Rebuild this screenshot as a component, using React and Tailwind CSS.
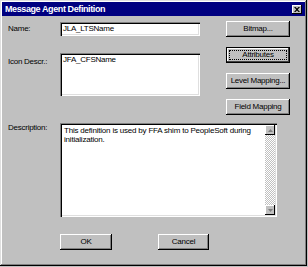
import React from "react";

const font = { fontFamily: '"Liberation Sans",Arial,sans-serif' };

function Btn({ children, w = "w-[64px]", def = false }) {
  if (def) {
    return (
      <div className={`${w} h-[16px] bg-[#c0c0c0] border border-black flex items-center justify-center`}>
        <div className="w-full h-full shadow-[inset_-1px_-1px_#404040,inset_1px_1px_#fff] p-[2px]">
          <div className="w-full h-full border border-dotted border-black flex items-center justify-center text-[8px] tracking-[-0.25px] leading-none whitespace-nowrap">
            {children}
          </div>
        </div>
      </div>
    );
  }
  return (
    <div
      className={`${w} h-[16px] bg-[#c0c0c0] shadow-[inset_-1px_-1px_#000,inset_1px_1px_#fff,inset_-2px_-2px_#808080] flex items-center justify-center text-[8px] tracking-[-0.25px] leading-none whitespace-nowrap`}
    >
      {children}
    </div>
  );
}

function Field({ className, children }) {
  return (
    <div className={`bg-white shadow-[inset_1px_1px_#808080,inset_2px_2px_#000,inset_-1px_-1px_#fff,inset_-2px_-2px_#dfdfdf] ${className}`}>
      {children}
    </div>
  );
}

export default function App() {
  return (
    <div style={font} className="w-[308px] h-[267px] bg-[#c0c0c0] text-black relative">
      <div className="w-[307px] h-[266px] bg-[#c0c0c0] shadow-[inset_-1px_-1px_#000,inset_1px_1px_#dfdfdf,inset_-2px_-2px_#808080,inset_2px_2px_#fff] p-[2px] flex flex-col">
        {/* title bar */}
        <div className="h-[14px] bg-[#000080] flex items-center justify-between pl-[3px] pr-[3px]">
          <span className="text-white font-bold text-[9px] leading-none tracking-[-0.4px]">Message Agent Definition</span>
          <div className="w-[10px] h-[9px] bg-[#c0c0c0] shadow-[inset_-1px_-1px_#000,inset_1px_1px_#fff] flex items-center justify-center">
            <svg width="6" height="5" viewBox="0 0 6 5">
              <path d="M0 0h1.5l1.5 1.5L4.5 0H6L3.8 2.5L6 5H4.5L3 3.5L1.5 5H0l2.2-2.5z" fill="#000" />
            </svg>
          </div>
        </div>

        {/* top section */}
        <div className="flex mt-[5px] pl-[6px]">
          <div className="w-[218px] flex flex-col">
            <div className="flex items-center mt-[1px] h-[14px]">
              <span className="w-[52px] text-[8px] tracking-[-0.25px] leading-none">Name:</span>
              <Field className="w-[140px] h-[14px] flex items-center pl-[3px] text-[8px] tracking-[-0.25px] leading-none">JLA_LTSName</Field>
            </div>
            <div className="flex items-start mt-[17px]">
              <span className="w-[52px] text-[8px] tracking-[-0.25px] leading-none mt-[5px] whitespace-nowrap">Icon Descr.:</span>
              <Field className="w-[140px] h-[43px] pl-[3px] pt-[3px] text-[8px] tracking-[-0.25px] leading-none">JFA_CFSName</Field>
            </div>
          </div>
          <div className="flex flex-col gap-[10px]">
            <Btn>Bitmap...</Btn>
            <Btn def>Attributes</Btn>
            <Btn>Level Mapping...</Btn>
            <Btn>Field Mapping</Btn>
          </div>
        </div>

        {/* description */}
        <div className="flex items-start pl-[6px] mt-[8px]">
          <span className="w-[52px] text-[8px] tracking-[-0.25px] leading-none mt-[1px]">Description:</span>
          <Field className="w-[217px] h-[94px] flex p-[2px]">
            <div className="flex-1 pl-[2px] pt-[1px] text-[8px] tracking-[-0.2px] leading-[9px]">
              This definition is used by FFA shim to PeopleSoft during initialization.
            </div>
            <div className="w-[10px] flex flex-col bg-[repeating-conic-gradient(#c0c0c0_0_25%,#fff_0_50%)] bg-[length:2px_2px]">
              <div className="h-[10px] bg-[#c0c0c0] shadow-[inset_-1px_-1px_#000,inset_1px_1px_#fff] flex items-center justify-center">
                <svg width="5" height="3" viewBox="0 0 5 3"><path d="M2.5 0L5 3H0z" fill="#808080" /></svg>
              </div>
              <div className="flex-1" />
              <div className="h-[10px] bg-[#c0c0c0] shadow-[inset_-1px_-1px_#000,inset_1px_1px_#fff] flex items-center justify-center">
                <svg width="5" height="3" viewBox="0 0 5 3"><path d="M0 0H5L2.5 3z" fill="#808080" /></svg>
              </div>
            </div>
          </Field>
        </div>

        {/* bottom buttons */}
        <div className="flex pl-[58px] mt-[17px] gap-[46px]">
          <Btn w="w-[52px]">OK</Btn>
          <Btn w="w-[51px]">Cancel</Btn>
        </div>
      </div>
    </div>
  );
}
